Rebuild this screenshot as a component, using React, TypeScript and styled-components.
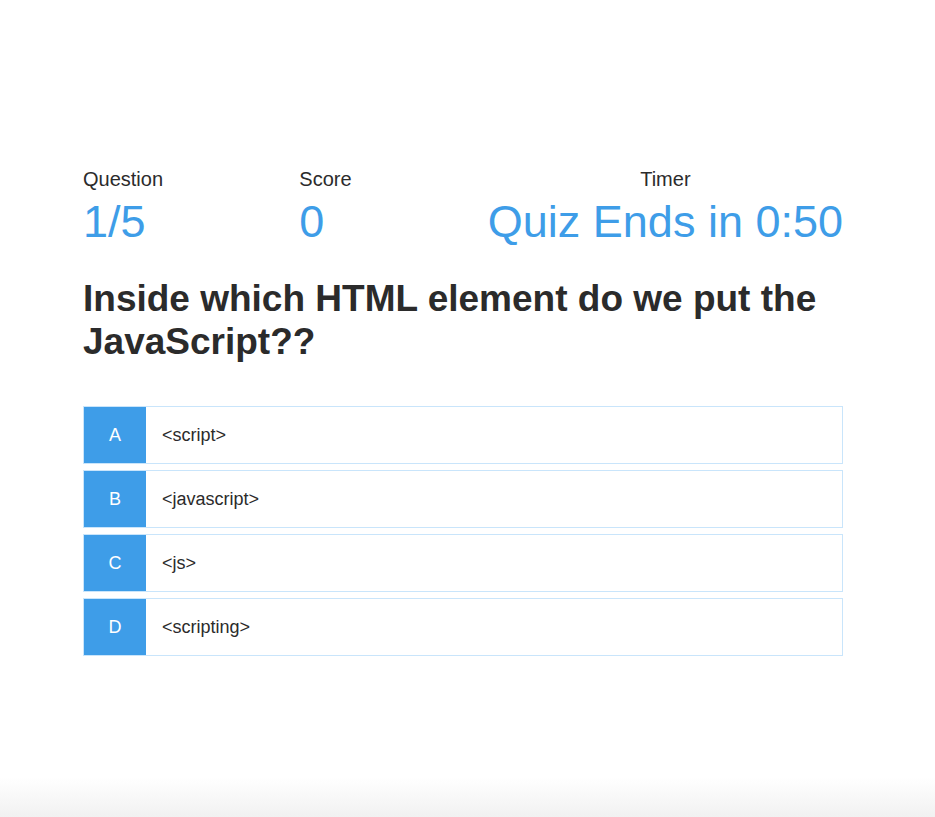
import styled, { createGlobalStyle } from 'styled-components';

const GlobalStyle = createGlobalStyle`
    html {
        min-height: 100%;
        background: linear-gradient(to bottom, #ffffff calc(100% - 40px), #f1f1f1 100%);
    }

    body {
        margin: 0;
        min-height: 100vh;
        font-family: "Liberation Sans", Arial, sans-serif;
        color: #2b2b2b;
    }
`;

const blue = '#3e9de8';

const QuizWrapper = styled.main`
    width: 760px;
    margin-left: 83px;
    padding-top: 168px;
`;

const Stats = styled.header`
    display: flex;
    justify-content: space-between;
    align-items: flex-start;
`;

const Stat = styled.div<{ $center?: boolean }>`
    text-align: ${props => (props.$center ? 'center' : 'left')};

    .label {
        font-size: 20px;
        margin-bottom: 5px;
    }

    .value {
        font-size: 45px;
        color: ${blue};
    }
`;

const QuestionText = styled.h1`
    margin: 30px 0 43px;
    font-size: 37px;
    font-weight: 700;
    line-height: 42.5px;
    color: #2b2b2b;
`;

const Options = styled.ul`
    list-style: none;
    margin: 0;
    padding: 0;

    li + li {
        margin-top: 6px;
    }
`;

const Option = styled.li`
    display: flex;
    height: 56px;
    border: 1px solid #c9e5fb;
    font-size: 18px;
    cursor: pointer;

    .letter {
        width: 62px;
        display: flex;
        align-items: center;
        justify-content: center;
        background: ${blue};
        color: #fff;
    }

    .text {
        display: flex;
        align-items: center;
        padding-left: 16px;
    }
`;

const options = ['<script>', '<javascript>', '<js>', '<scripting>'];
const letters = ['A', 'B', 'C', 'D'];

const App: React.FC = () => (
    <>
        <GlobalStyle />
        <QuizWrapper>
            <Stats>
                <Stat>
                    <div className='label'>Question</div>
                    <div className='value'>1/5</div>
                </Stat>
                <Stat>
                    <div className='label'>Score</div>
                    <div className='value'>0</div>
                </Stat>
                <Stat $center>
                    <div className='label'>Timer</div>
                    <div className='value'>Quiz Ends in 0:50</div>
                </Stat>
            </Stats>
            <QuestionText>Inside which HTML element do we put the JavaScript??</QuestionText>
            <Options>
                {options.map((option, i) => (
                    <Option key={option}>
                        <span className='letter'>{letters[i]}</span>
                        <span className='text'>{option}</span>
                    </Option>
                ))}
            </Options>
        </QuizWrapper>
    </>
);

export default App;
